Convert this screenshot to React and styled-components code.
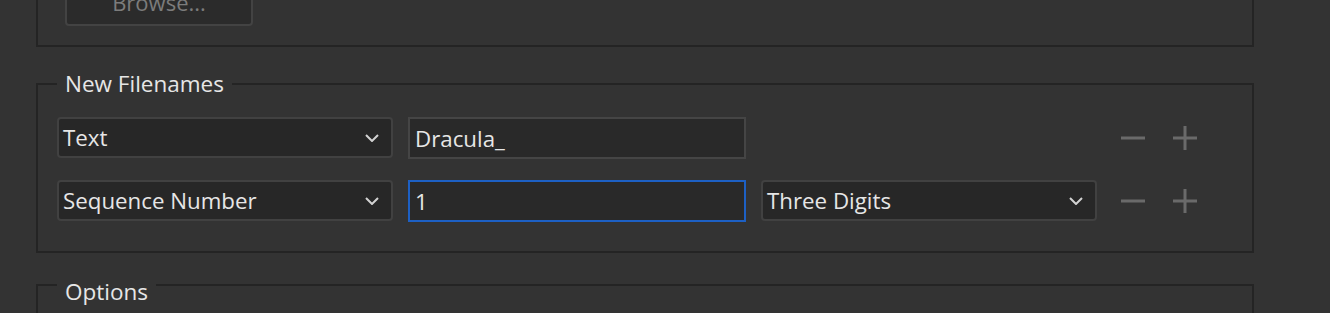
import React from 'react';
import styled, { createGlobalStyle } from 'styled-components';

const GlobalStyle = createGlobalStyle`
    html {
        overflow: hidden;
        background: #333333;
    }
    body {
        margin: 0;
        background: #333333;
        font-family: "Open Sans", "Noto Sans", sans-serif;
        color: #e6e6e6;
    }
`;

const Page = styled.div`
    width: 1218px;
    padding-left: 36px;
    padding-bottom: 40px;
`;

const TopPanel = styled.div`
    margin-top: -40px;
    border: 2px solid #242424;
    padding: 20px 27px 19px;
`;

const BrowseButton = styled.button`
    display: block;
    width: 188px;
    height: 44px;
    background: #2b2b2b;
    border: 2px solid #434343;
    border-radius: 4px;
    color: #7c7c7c;
    font-family: inherit;
    font-size: 22px;
    padding: 0 0 4px;
`;

const Group = styled.fieldset`
    margin: ${p => p.$gap}px 0 0;
    border: 2px solid #242424;
    padding: 20px 19px 29px;
    min-height: ${p => p.$minHeight || 0}px;
`;

const Legend = styled.legend`
    padding: ${p => p.$drop}px 8px 0;
    font-size: 22.5px;
    line-height: 26px;
    color: #e6e6e6;
`;

const Rows = styled.div`
    display: grid;
    grid-template-columns: 336px 338px 336px auto;
    column-gap: 15px;
    row-gap: 21px;
    align-items: start;
`;

const SelectBox = styled.div`
    display: flex;
    align-items: center;
    justify-content: space-between;
    height: 41px;
    box-sizing: border-box;
    background: #272727;
    border: 2px solid #414141;
    border-radius: 4px;
    padding: 0 12px 0 4px;
    font-size: 22.3px;
`;

const TextField = styled.div`
    display: flex;
    align-items: center;
    height: 42px;
    box-sizing: border-box;
    background: #292929;
    border: 2px solid ${p => (p.$focused ? '#1d60c4' : '#454545')};
    padding: 0 5px;
    font-size: 22.3px;
`;

const Actions = styled.div`
    display: flex;
    gap: 16px;
    height: 42px;
    align-items: center;
    margin-left: 3px;
`;

const IconButton = styled.button`
    width: 36px;
    height: 36px;
    padding: 0;
    background: none;
    border: none;
    display: flex;
    align-items: center;
    justify-content: center;
`;

const Chevron = () => (
    <svg width="14" height="8" viewBox="0 0 14 8">
        <polyline points="1,1 7,7 13,1" fill="none" stroke="#d2d2d2" strokeWidth="2" />
    </svg>
);

const Minus = () => (
    <svg width="24" height="24" viewBox="0 0 24 24">
        <rect x="0" y="10.5" width="24" height="3" fill="#6a6a6a" />
    </svg>
);

const Plus = () => (
    <svg width="24" height="24" viewBox="0 0 24 24">
        <rect x="0" y="10.5" width="24" height="3" fill="#6a6a6a" />
        <rect x="10.5" y="0" width="3" height="24" fill="#6a6a6a" />
    </svg>
);

const Select = ({ value }) => (
    <SelectBox>
        <span>{value}</span>
        <Chevron />
    </SelectBox>
);

const RowActions = () => (
    <Actions>
        <IconButton><Minus /></IconButton>
        <IconButton><Plus /></IconButton>
    </Actions>
);

const App = () => {
    return (
        <Page>
            <GlobalStyle />
            <TopPanel>
                <BrowseButton>Browse...</BrowseButton>
            </TopPanel>

            <Group $gap={24}>
                <Legend $drop={0}>New Filenames</Legend>
                <Rows>
                    <Select value="Text" />
                    <TextField>Dracula_</TextField>
                    <div />
                    <RowActions />

                    <Select value="Sequence Number" />
                    <TextField $focused>1</TextField>
                    <Select value="Three Digits" />
                    <RowActions />
                </Rows>
            </Group>

            <Group $gap={12} $minHeight={60}>
                <Legend $drop={14}>Options</Legend>
            </Group>
        </Page>
    );
};

export default App;
